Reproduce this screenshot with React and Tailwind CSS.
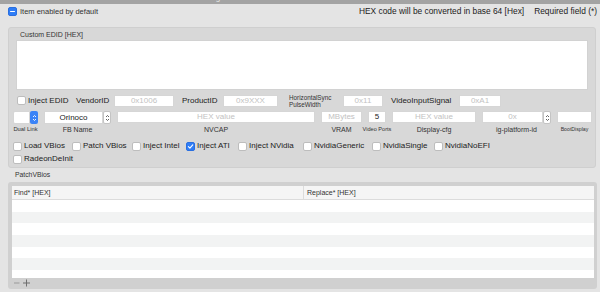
import React from "react";

const Check = ({ checked, minus, className = "" }) => (
  <div
    className={`w-[9px] h-[9px] rounded-[2px] shrink-0 flex items-center justify-center ${
      checked || minus ? "bg-[#2f7df6] border border-[#2a6fe0]" : "bg-white border border-[#bdbdbd]"
    } ${className}`}
  >
    {minus && <div className="w-[5px] h-[1.5px] bg-white rounded" />}
    {checked && (
      <svg width="7" height="7" viewBox="0 0 10 10">
        <path d="M2 5.2 L4.2 7.4 L8.2 2.6" stroke="white" strokeWidth="1.6" fill="none" strokeLinecap="round" strokeLinejoin="round" />
      </svg>
    )}
  </div>
);

const Stepper = ({ blue }) => (
  <div
    className={`h-full w-[8px] flex items-center justify-center rounded-[2px] shrink-0 ${
      blue ? "bg-[#3a83f7]" : "bg-white border border-[#c4c4c4]"
    }`}
  >
    <svg width="5" height="8" viewBox="0 0 5 8">
      <path d="M1 3 L2.5 1.5 L4 3 M1 5 L2.5 6.5 L4 5" stroke={blue ? "white" : "#555"} strokeWidth="0.9" fill="none" />
    </svg>
  </div>
);

const Input = ({ w, ph, val, ml, center = true }) => (
  <div
    className={`h-[12px] bg-white border border-[#d6d6d6] flex items-center ${center ? "justify-center" : ""} text-[8px] leading-none shrink-0`}
    style={{ width: w, marginLeft: ml }}
  >
    {val ? <span className="text-[#222]">{val}</span> : <span className="text-[#c2c2c2]">{ph}</span>}
  </div>
);

const CB = ({ label, w, checked }) => (
  <div className="flex items-center shrink-0" style={{ width: w }}>
    <Check checked={checked} />
    <span className="ml-[2px] text-[8px] text-[#222] leading-none whitespace-nowrap">{label}</span>
  </div>
);

const Col = ({ w, ml, children, label, lsize = "text-[7px]" }) => (
  <div className="flex flex-col items-stretch shrink-0" style={{ width: w, marginLeft: ml }}>
    <div className="h-[13px] flex">{children}</div>
    <div className={`h-[11px] flex items-center justify-center ${lsize} text-[#333] leading-none whitespace-nowrap`}>{label}</div>
  </div>
);

export default function App() {
  return (
    <div className="w-[600px] h-[292px] bg-[#e4e4e4] overflow-hidden font-['Liberation_Sans',Arial,sans-serif] text-[#222]">
      <div className="h-[4px] bg-[#a3a3a3] overflow-hidden">
        <div className="pl-[197px] -mt-[6px] text-[8px] leading-[8px] text-[#e8e8e8]">Configuration</div>
      </div>
      <div className="h-[13px] mt-[1px] flex items-center pl-[8px]">
        <Check minus />
        <span className="ml-[3px] text-[7.5px] text-[#333] leading-none">Item enabled by default</span>
        <div className="ml-auto mr-[3px] flex items-center text-[8.4px] leading-none text-[#222]">
          <span>HEX code will be converted in base 64 [Hex]</span>
          <span className="ml-[10px]">Required field (*)</span>
        </div>
      </div>

      <div className="ml-[8px] mt-[9px] w-[588px] h-[141px] bg-[#d8d8d8] border border-[#cfcfcf] rounded-[3px]">
        <div className="h-[12px] pl-[11px] flex items-center text-[7px] text-[#333] leading-none">Custom EDID [HEX]</div>
        <div className="ml-[7px] w-[572px] h-[50px] bg-white border border-[#d2d2d2]" />
        <div className="mt-[4px] h-[13px] flex items-center pl-[8px]">
          <div className="flex items-center w-[59px] shrink-0">
            <Check />
            <span className="ml-[2px] text-[8px] leading-none text-[#222]">Inject EDID</span>
          </div>
          <span className="w-[38px] shrink-0 text-[8px] leading-none text-[#222]">VendorID</span>
          <Input w={60} ph="0x1006" />
          <span className="ml-[8px] w-[41px] shrink-0 text-[8px] leading-none text-[#222]">ProductID</span>
          <Input w={55} ph="0x9XXX" />
          <div className="ml-[11px] w-[54px] shrink-0 flex flex-col text-[6.3px] leading-[7px] text-[#333]">
            <span>HorizontalSync</span>
            <span>PulseWidth</span>
          </div>
          <Input w={40} ph="0x11" />
          <span className="ml-[8px] w-[68px] shrink-0 text-[8px] leading-none text-[#222]">VideoInputSignal</span>
          <Input w={42} ph="0xA1" />
        </div>

        <div className="mt-[4px] flex pl-[4px]">
          <Col w={25} ml={0} label="Dual Link" lsize="text-[5.8px]">
            <div className="flex-1 bg-white border border-[#d6d6d6] rounded-l-[2px]" />
            <Stepper blue />
          </Col>
          <Col w={67} ml={6} label="FB Name">
            <div className="flex-1 bg-white border border-[#d6d6d6] flex items-center justify-center text-[8px] leading-none">Orinoco</div>
            <Stepper />
          </Col>
          <Col w={198} ml={6} label="NVCAP">
            <Input w={198} ph="HEX value" />
          </Col>
          <Col w={41} ml={6} label="VRAM">
            <Input w={41} ph="MBytes" />
          </Col>
          <Col w={18} ml={6} label="Video Ports" lsize="text-[5.6px]">
            <Input w={18} val="5" />
          </Col>
          <Col w={84} ml={6} label="Display-cfg">
            <Input w={84} ph="HEX value" />
          </Col>
          <Col w={69} ml={6} label="ig-platform-id">
            <div className="flex-1 bg-white border border-[#d6d6d6] flex items-center justify-center text-[8px] leading-none text-[#c2c2c2] h-[12px]">0x</div>
            <Stepper />
          </Col>
          <Col w={35} ml={6} label="BootDisplay" lsize="text-[5.2px]">
            <Input w={35} ph="" />
          </Col>
        </div>

        <div className="mt-[6px] h-[10px] flex items-center pl-[4px]">
          <CB label="Load VBios" w={59} />
          <CB label="Patch VBios" w={60} />
          <CB label="Inject Intel" w={54} />
          <CB label="Inject ATI" w={52} checked />
          <CB label="Inject NVidia" w={65} />
          <CB label="NvidiaGeneric" w={69} />
          <CB label="NvidiaSingle" w={62} />
          <CB label="NvidiaNoEFI" w={60} />
        </div>
        <div className="mt-[3px] h-[10px] flex items-center pl-[4px]">
          <CB label="RadeonDeInit" w={80} />
        </div>
      </div>

      <div className="h-[14px] pl-[15px] flex items-center text-[6.8px] text-[#333] leading-none">PatchVBios</div>

      <div className="ml-[8px] w-[589px] h-[107px] bg-[#d0d0d0] rounded-[3px] pt-[4px] pl-[4px] pr-[3px]">
        <div className="bg-white h-[92px] overflow-hidden">
          <div className="h-[14px] flex bg-[#f5f5f5] border-b border-[#dcdcdc] text-[7px] text-[#333] leading-none">
            <div className="w-[292px] pl-[2px] flex items-center border-r border-[#dcdcdc]">Find* [HEX]</div>
            <div className="pl-[3px] flex items-center">Replace* [HEX]</div>
          </div>
          {[0, 1, 2, 3, 4, 5, 6].map((i) => (
            <div key={i} className={`h-[11.7px] ${i % 2 ? "bg-[#f2f3f3]" : "bg-white"}`} />
          ))}
        </div>
        <div className="h-[10px] flex items-center pl-[1px] text-[#8a8a8a]">
          <svg width="18" height="8" viewBox="0 0 18 8">
            <path d="M1 4 H6.5" stroke="#9a9a9a" strokeWidth="1" />
            <path d="M10 4 H17 M13.5 0.5 V7.5" stroke="#6f6f6f" strokeWidth="1" />
          </svg>
        </div>
      </div>
    </div>
  );
}
